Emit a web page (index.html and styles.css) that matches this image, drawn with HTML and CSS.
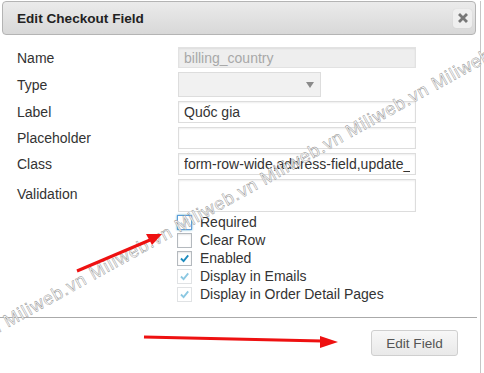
FILE: index.html
```
<!DOCTYPE html>
<html lang="en">
<head>
  <meta charset="UTF-8">
  <title>Edit Checkout Field</title>
  <link rel="stylesheet" href="styles.css">
</head>
<body>
  <div class="dialog">
    <div class="titlebar">
      <span class="title">Edit Checkout Field</span>
      <span class="close">
        <svg width="10" height="10" viewBox="0 0 10 10"><path d="M2 2 L8 8 M8 2 L2 8" stroke="#777" stroke-width="2.8" stroke-linecap="square"/></svg>
      </span>
    </div>

    <div class="content">
      <div class="form-grid">
        <label>Name</label>
        <input class="field disabled short" type="text" value="billing_country" disabled>

        <label>Type</label>
        <div class="select"><span class="caret"></span></div>

        <label>Label</label>
        <input class="field" type="text" value="Quốc gia">

        <label>Placeholder</label>
        <input class="field" type="text" value="">

        <label>Class</label>
        <input class="field" type="text" value="form-row-wide,address-field,update_totals_on_change">

        <label class="top">Validation</label>
        <div class="multi"></div>
      </div>

      <!-- option checkboxes -->
      <ul class="checks">
        <li><span class="box focus"><svg viewBox="0 0 14 14"><path d="M3 7 L6 10 L11 3" stroke="#c7d6e0" stroke-width="1.6" fill="none"/></svg></span>Required</li>
        <li><span class="box"></span>Clear Row</li>
        <li><span class="box"><svg viewBox="0 0 14 14"><path d="M3.2 7 L6 9.8 L11 3.6" stroke="#1e8cbe" stroke-width="2" fill="none"/></svg></span>Enabled</li>
        <li><span class="box off"><svg viewBox="0 0 14 14"><path d="M3.2 7 L6 9.8 L11 3.6" stroke="#8cc8e2" stroke-width="2" fill="none"/></svg></span>Display in Emails</li>
        <li><span class="box off"><svg viewBox="0 0 14 14"><path d="M3.2 7 L6 9.8 L11 3.6" stroke="#8cc8e2" stroke-width="2" fill="none"/></svg></span>Display in Order Detail Pages</li>
      </ul>
    </div>

    <div class="buttonpane">
      <button class="btn">Edit Field</button>
    </div>
  </div>

  <!-- watermark + annotation arrows drawn over the dialog -->
  <div class="overlay">
    <div class="watermark">Miliweb.vn Miliweb.vn Miliweb.vn Miliweb.vn Miliweb.vn Miliweb.vn Miliweb.vn</div>
    <svg class="arrows" width="484" height="373" viewBox="0 0 484 373">
      <line x1="77" y1="271" x2="150" y2="240" stroke="#ee1111" stroke-width="3"/>
      <polygon points="162,234 146,234 152,245" fill="#ee1111"/>
      <line x1="144" y1="337" x2="322" y2="341" stroke="#ee1111" stroke-width="3"/>
      <polygon points="338,342 320,336 320,348" fill="#ee1111"/>
    </svg>
  </div>
</body>
</html>
```

FILE: styles.css
```
/* Base Reset */
html, body, ul {
  margin: 0;
  padding: 0;
}
html {
  overflow: hidden;
}
body {
  font-family: 'Liberation Sans', Arial, sans-serif;
  font-size: 14px;
  color: #333;
  background: #fff;
  width: 484px;
  height: 373px;
  overflow: hidden;
  position: relative;
}

/* Dialog */
.dialog {
  width: 480px;
  height: 373px;
  border-right: 1px solid #c6c6c6;
  background: #fff;
}

.titlebar {
  display: flex;
  align-items: center;
  justify-content: space-between;
  height: 32px;
  margin: 1px 4px 0 2px;
  padding: 0 3px 0 14px;
  border: 1px solid #b4b4b4;
  border-radius: 4px;
  background: linear-gradient(#ebebeb, #d8d8d8);
}

.title {
  font-weight: bold;
  font-size: 13.6px;
  color: #222;
}

.close {
  display: flex;
  align-items: center;
  justify-content: center;
  width: 19px;
  height: 19px;
  border-radius: 3px;
  background: #efefef;
  box-shadow: 0 0 1px rgba(0, 0, 0, 0.15);
}

/* Form */
.content {
  padding: 12px 0 0 17px;
}

.form-grid {
  display: grid;
  grid-template-columns: 161px 238px;
  row-gap: 4px;
  align-items: center;
}

.form-grid label {
  color: #333;
}

.form-grid label.top {
  margin-bottom: 4px;
}

.field {
  box-sizing: border-box;
  width: 238px;
  height: 22px;
  margin: 0;
  padding: 0 5px;
  border: 1px solid #ddd;
  box-shadow: inset 0 1px 2px rgba(0, 0, 0, 0.07);
  font-family: inherit;
  font-size: 14px;
  color: #333;
  background: #fff;
  outline: none;
}

.field.short {
  height: 21px;
}

.field.disabled {
  background: #eee;
  color: #a8a8a8;
  border-color: #e2e2e2;
}

.select {
  box-sizing: border-box;
  width: 143px;
  height: 25px;
  border: 1px solid #ddd;
  background: #f1f1f1;
  position: relative;
}

.caret {
  position: absolute;
  right: 6px;
  top: 9px;
  border-left: 4px solid transparent;
  border-right: 4px solid transparent;
  border-top: 6px solid #8a8a8a;
}

.multi {
  box-sizing: border-box;
  width: 238px;
  height: 33px;
  border: 1px solid #ddd;
  box-shadow: inset 0 1px 2px rgba(0, 0, 0, 0.07);
}

/* Checkboxes */
.checks {
  list-style: none;
  margin: 1px 0 0 160px;
}

.checks li {
  display: flex;
  align-items: center;
  height: 18px;
}

.box {
  box-sizing: border-box;
  width: 15px;
  height: 15px;
  margin-right: 8px;
  border: 1px solid #b4b9be;
  background: #fff;
  box-shadow: inset 0 1px 2px rgba(0, 0, 0, 0.1);
}

.box svg {
  display: block;
  width: 13px;
  height: 13px;
}

.box.focus {
  border-color: #5b9dd9;
  box-shadow: 0 0 2px rgba(30, 140, 190, 0.8);
}

.box.off {
  border-color: #e0e2e4;
  box-shadow: none;
}

/* Buttons */
.buttonpane {
  display: flex;
  justify-content: flex-end;
  margin: 14px 3px 0 0;
  padding: 12px 19px 0 0;
  border-top: 1px solid #aaa;
}

.btn {
  width: 87px;
  height: 26px;
  border: 1px solid #cfcfcf;
  border-radius: 3px;
  background: linear-gradient(#f7f7f7, #e9e9e9);
  font-family: inherit;
  font-size: 13.6px;
  color: #555;
}

/* Overlays */
.overlay {
  position: absolute;
  left: 0;
  top: 0;
  width: 484px;
  height: 373px;
  overflow: hidden;
  pointer-events: none;
}

.watermark {
  position: absolute;
  left: -85px;
  top: 362px;
  transform: rotate(-29deg);
  transform-origin: 0 0;
  white-space: nowrap;
  font-size: 18px;
  letter-spacing: 0.8px;
  line-height: 1;
  color: #fff;
  -webkit-text-stroke: 0.45px #8c8c8c;
}

.arrows {
  position: absolute;
  left: 0;
  top: 0;
}
```
